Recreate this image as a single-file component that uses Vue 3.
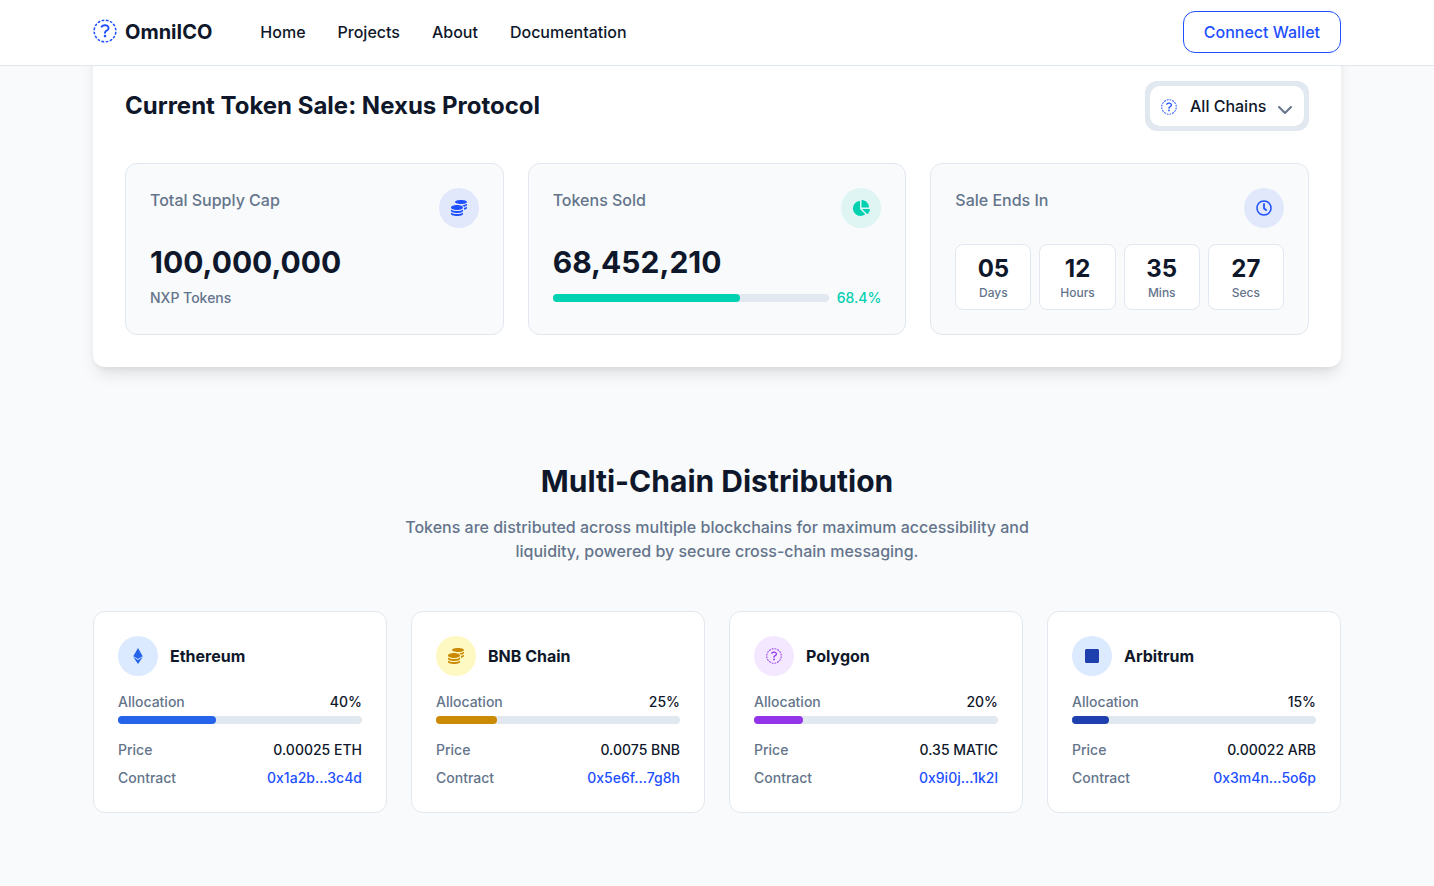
<script setup>
const navLinks = ['Home', 'Projects', 'About', 'Documentation']

const countdown = [
  { value: '05', unit: 'Days' },
  { value: '12', unit: 'Hours' },
  { value: '35', unit: 'Mins' },
  { value: '27', unit: 'Secs' },
]

const chains = [
  { id: 'ethereum', name: 'Ethereum', icon: 'ethereum', share: 40, price: '0.00025 ETH', contract: '0x1a2b...3c4d' },
  { id: 'bnb', name: 'BNB Chain', icon: 'coins', share: 25, price: '0.0075 BNB', contract: '0x5e6f...7g8h' },
  { id: 'polygon', name: 'Polygon', icon: 'unknown', share: 20, price: '0.35 MATIC', contract: '0x9i0j...1k2l' },
  { id: 'arbitrum', name: 'Arbitrum', icon: 'square', share: 15, price: '0.00022 ARB', contract: '0x3m4n...5o6p' },
]

const icons = {
  coins: {
    box: '0 0 512 512',
    d: 'M0 405.3V448c0 35.3 86 64 192 64s192-28.7 192-64v-42.7C342.7 434.4 267.2 448 192 448S41.3 434.4 0 405.3zM320 128c106 0 192-28.7 192-64S426 0 320 0 128 28.7 128 64s86 64 192 64zM0 300.4V352c0 35.3 86 64 192 64s192-28.7 192-64v-51.6c-41.3 34-116.9 51.6-192 51.6S41.3 334.4 0 300.4zm416 11c57.3-11.1 96-31.7 96-55.4v-42.7c-23.2 16.4-57.3 27.6-96 34.5v63.6zM192 160C86 160 0 195.8 0 240s86 80 192 80 192-35.8 192-80-86-80-192-80zm219.3 56.3c60-10.8 100.7-32 100.7-56.3v-42.7c-35.5 25.1-96.5 38.6-160.7 41.8 29.5 14.3 51.2 33.5 60 57.2z',
  },
  ethereum: {
    box: '0 0 320 512',
    d: 'M311.9 260.8L160 353.6 8 260.8 160 0l151.9 260.8zM160 383.4L8 290.6 160 512l152-221.4-152 92.8z',
  },
  square: {
    box: '0 0 448 512',
    d: 'M400 32H48C21.5 32 0 53.5 0 80v352c0 26.5 21.5 48 48 48h352c26.5 0 48-21.5 48-48V80c0-26.5-21.5-48-48-48z',
  },
  // Dashed ring around a question mark
  unknown: {
    box: '0 0 512 512',
    d: 'M156.5,447.7l-12.6,29.5c-18.7-9.5-35.9-21.2-51.5-34.9l22.7-22.7C127.6,430.5,141.5,440,156.5,447.7z M40.6,272H8.5c1.4,21.2,5.4,41.7,11.7,61.1L50,321.2C45.1,305.5,41.8,289,40.6,272z M40.6,240c1.4-18.8,5.2-37,11.1-54.1l-29.5-12.6C14.7,194.3,10,216.7,8.5,240H40.6z M64.3,156.5c7.8-14.9,17.2-28.8,28.1-41.5L69.7,92.3c-13.7,15.6-25.5,32.8-34.9,51.5L64.3,156.5z M397,419.6c-13.9,12-29.4,22.3-46.1,30.4l11.9,29.8c20.7-9.9,39.8-22.6,56.9-37.6L397,419.6z M115,92.4c13.9-12,29.4-22.3,46.1-30.4l-11.9-29.8c-20.7,9.9-39.8,22.6-56.8,37.6L115,92.4z M447.7,355.5c-7.8,14.9-17.2,28.8-28.1,41.5l22.7,22.7c13.7-15.6,25.5-32.9,34.9-51.5L447.7,355.5z M471.4,272c-1.4,18.8-5.2,37-11.1,54.1l29.5,12.6c7.5-21.1,12.2-43.5,13.6-66.8H471.4z M321.2,462c-15.7,5-32.2,8.2-49.2,9.4v32.1c21.2-1.4,41.7-5.4,61.1-11.7L321.2,462z M240,471.4c-18.8-1.4-37-5.2-54.1-11.1l-12.6,29.5c21.1,7.5,43.5,12.2,66.8,13.6V471.4z M462,190.8c5,15.7,8.2,32.2,9.4,49.2h32.1c-1.4-21.2-5.4-41.7-11.7-61.1L462,190.8z M92.4,397c-12-13.9-22.3-29.4-30.4-46.1l-29.8,11.9c9.9,20.7,22.6,39.8,37.6,56.9L92.4,397z M272,40.6c18.8,1.4,36.9,5.2,54.1,11.1l12.6-29.5C317.7,14.7,295.3,10,272,8.5V40.6z M190.8,50c15.7-5,32.2-8.2,49.2-9.4V8.5c-21.2,1.4-41.7,5.4-61.1,11.7L190.8,50z M442.3,92.3L419.6,115c12,13.9,22.3,29.4,30.5,46.1l29.8-11.9C470,128.5,457.3,109.4,442.3,92.3z M397,92.4l22.7-22.7c-15.6-13.7-32.8-25.5-51.5-34.9l-12.6,29.5C370.4,72.1,384.4,81.5,397,92.4z M284,364a28,28 0 1,1 -56,0a28,28 0 1,1 56,0z M263.7,312h-16c-6.6,0-12-5.4-12-12c0-71,77.4-63.9,77.4-107.8c0-20-17.8-40.2-57.4-40.2c-29.1,0-44.3,9.6-59.2,28.7c-3.9,5-11.1,6-16.2,2.4l-13.1-9.2c-5.6-3.9-6.9-11.8-2.6-17.2c21.2-27.2,46.4-44.7,91.2-44.7c52.3,0,97.4,29.8,97.4,80.2c0,67.6-77.4,63.5-77.4,107.8C275.7,306.6,270.3,312,263.7,312z',
  },
}
</script>

<template>
  <div class="page">
    <header class="topbar">
      <div class="container topbar-row">
        <a class="brand">
          <svg class="brand-icon" :viewBox="icons.unknown.box"><path :d="icons.unknown.d" /></svg>
          <span>OmniICO</span>
        </a>
        <nav class="nav">
          <a v-for="link in navLinks" :key="link">{{ link }}</a>
        </nav>
        <button class="wallet">Connect Wallet</button>
      </div>
    </header>

    <main class="container">
      <section class="sale">
        <div class="sale-head">
          <h2>Current Token Sale: Nexus Protocol</h2>
          <div class="select">
            <button class="select-btn">
              <svg class="glyph select-icon" :viewBox="icons.unknown.box"><path :d="icons.unknown.d" /></svg>
              <span class="select-label">All Chains</span>
              <svg class="chevron" viewBox="0 0 16 10"><path d="M2 3l6 6 6-6" /></svg>
            </button>
          </div>
        </div>

        <div class="stats">
          <article class="stat">
            <div class="stat-head">
              <span>Total Supply Cap</span>
              <i class="badge badge-primary">
                <svg class="glyph" :viewBox="icons.coins.box"><path :d="icons.coins.d" /></svg>
              </i>
            </div>
            <div class="stat-value">100,000,000</div>
            <div class="stat-note">NXP Tokens</div>
          </article>

          <article class="stat">
            <div class="stat-head">
              <span>Tokens Sold</span>
              <i class="badge badge-green">
                <svg class="glyph pie" viewBox="0 0 544 512"><path d="M527.79 288H290.5l158.03 158.03c6.04 6.04 15.98 6.53 22.19.68 38.7-36.46 65.32-85.61 73.13-140.86 1.34-9.46-6.51-17.85-16.06-17.85zm-15.83-64.8C503.72 103.74 408.26 8.28 288.8.04 279.68-.59 272 7.1 272 16.24V240h223.77c9.14 0 16.82-7.68 16.19-16.8zM224 288V50.71c0-9.55-8.39-17.4-17.84-16.06C86.99 51.49-4.1 155.6.14 280.37 4.5 408.51 114.83 512.02 243.03 511.98c50.4-.02 98.6-16.17 139-44.51 7.68-5.43 8.15-16.67 1.5-23.33L224 288z" /></svg>
              </i>
            </div>
            <div class="stat-value">68,452,210</div>
            <div class="sold">
              <div class="bar"><div class="bar-fill sold-fill"></div></div>
              <span>68.4%</span>
            </div>
          </article>

          <article class="stat">
            <div class="stat-head">
              <span>Sale Ends In</span>
              <i class="badge badge-primary">
                <svg class="glyph" viewBox="0 0 512 512"><path d="M256 8C119 8 8 119 8 256s111 248 248 248 248-111 248-248S393 8 256 8zm0 448c-110.500 0-200-89.500-200-200S145.500 56 256 56s200 89.500 200 200-89.500 200-200 200zm61.800-104.400l-84.900-61.700c-3.100-2.300-4.900-5.900-4.900-9.700V116c0-6.600 5.400-12 12-12h32c6.600 0 12 5.400 12 12v141.700l66.800 48.600c5.400 3.900 6.500 11.400 2.600 16.800L334.600 349c-3.900 5.300-11.400 6.500-16.800 2.600z" /></svg>
              </i>
            </div>
            <div class="countdown">
              <div v-for="part in countdown" :key="part.unit" class="tick">
                <div class="tick-value">{{ part.value }}</div>
                <div class="tick-unit">{{ part.unit }}</div>
              </div>
            </div>
          </article>
        </div>
      </section>

      <section class="distribution">
        <h2>Multi-Chain Distribution</h2>
        <p>Tokens are distributed across multiple blockchains for maximum accessibility and liquidity, powered by secure cross-chain messaging.</p>

        <div class="chains">
          <article v-for="chain in chains" :key="chain.id" class="chain" :class="chain.id">
            <div class="chain-head">
              <i class="badge chain-badge">
                <svg class="glyph" :viewBox="icons[chain.icon].box"><path :d="icons[chain.icon].d" /></svg>
              </i>
              <h3>{{ chain.name }}</h3>
            </div>
            <div class="row"><span>Allocation</span><b>{{ chain.share }}%</b></div>
            <div class="bar chain-bar"><div class="bar-fill chain-fill" :style="{ width: chain.share + '%' }"></div></div>
            <div class="row"><span>Price</span><b>{{ chain.price }}</b></div>
            <div class="row contract"><span>Contract</span><a>{{ chain.contract }}</a></div>
          </article>
        </div>
      </section>
    </main>
  </div>
</template>

<style>
body {
  background: #f8fafc;
}
</style>

<style scoped>
.page {
  --primary: #1e50ff;
  --green: #00d1b0;
  --ink: #0f172a;
  --muted: #64748b;
  --line: #e2e8f0;
  height: 886px;
  overflow: hidden;
  background: #f8fafc;
  color: var(--ink);
  font: 500 16px/24px Inter, sans-serif;
}
.page *,
.page *::before {
  box-sizing: border-box;
}
h2, h3, p {
  margin: 0;
}
button {
  font: inherit;
  color: inherit;
  background: #fff;
}
.container {
  max-width: 1280px;
  margin: 0 auto;
  padding: 0 16px;
}
.topbar {
  position: relative;
  z-index: 2;
  height: 66px;
  background: #fff;
  border-bottom: 1px solid #e2e8f0;
}
.topbar-row {
  display: flex;
  align-items: center;
  height: 64px;
}
.brand {
  display: flex;
  align-items: center;
  gap: 8px;
  font-size: 20px;
  line-height: 28px;
  font-weight: 700;
}
.brand-icon {
  width: 24px;
  height: 24px;
  margin-top: -2px;
  fill: var(--primary);
}
.nav {
  display: flex;
  gap: 32px;
  margin-left: 48px;
}
.wallet {
  margin-left: auto;
  padding: 8px 20px;
  border: 1px solid var(--primary);
  border-radius: 12px;
  color: var(--primary);
}
.sale {
  margin-top: -40px;
  padding: 55px 32px 32px;
  background: #fff;
  border-radius: 12px;
  box-shadow: 0 10px 15px -3px rgba(0, 0, 0, 0.1), 0 4px 6px -2px rgba(0, 0, 0, 0.05);
}
.sale-head {
  display: flex;
  align-items: center;
  justify-content: space-between;
  height: 50px;
  margin-bottom: 32px;
}
.sale-head h2 {
  font-size: 24px;
  line-height: 32px;
  font-weight: 700;
}
.select {
  padding: 5px;
  border-radius: 12px;
  background: var(--line);
}
.select-btn {
  display: flex;
  align-items: center;
  width: 154px;
  height: 40px;
  padding: 0 11px;
  border: 0;
  border-radius: 10px;
}
.glyph {
  width: 16px;
  height: 16px;
  fill: currentColor;
}
.pie {
  width: 17px;
}
.select-icon {
  margin-top: 2px;
  color: var(--primary);
}
.select-label {
  margin-left: 13px;
}
.chevron {
  width: 16px;
  height: 10px;
  margin: 6px 0 0 auto;
  fill: none;
  stroke: var(--muted);
  stroke-width: 2;
  stroke-linecap: round;
  stroke-linejoin: round;
}
.stats {
  display: grid;
  grid-template-columns: repeat(3, 1fr);
  gap: 24px;
}
.stat {
  padding: 24px;
  background: #f8fafc;
  border: 1px solid var(--line);
  border-radius: 12px;
}
.stat-head {
  display: flex;
  justify-content: space-between;
  margin-bottom: 16px;
  color: var(--muted);
}
.badge {
  display: flex;
  align-items: center;
  justify-content: center;
  width: 40px;
  height: 40px;
  border-radius: 50%;
}
.badge-primary {
  background: rgba(30, 80, 255, 0.1);
  color: var(--primary);
}
.badge-green {
  background: rgba(0, 209, 176, 0.1);
  color: var(--green);
}
.stat-value {
  margin-bottom: 8px;
  font-size: 30px;
  line-height: 36px;
  font-weight: 700;
}
.stat-note {
  color: var(--muted);
  font-size: 14px;
  line-height: 20px;
}
.sold {
  display: flex;
  align-items: center;
  gap: 8px;
  color: var(--green);
  font-size: 14px;
  line-height: 20px;
}
.bar {
  flex: 1;
  height: 8px;
  border-radius: 4px;
  background: var(--line);
}
.bar-fill {
  height: 100%;
  border-radius: 4px;
}
.sold-fill {
  width: 68%;
  background: var(--green);
}
.countdown {
  display: grid;
  grid-template-columns: repeat(4, 1fr);
  gap: 8px;
}
.tick {
  padding: 8px;
  border: 1px solid var(--line);
  border-radius: 8px;
  background: #fff;
  text-align: center;
}
.tick-value {
  font-size: 24px;
  line-height: 32px;
  font-weight: 700;
}
.tick-unit {
  color: var(--muted);
  font-size: 12px;
  line-height: 16px;
}
.distribution {
  padding-top: 96px;
}
.distribution h2 {
  font-size: 30px;
  line-height: 36px;
  font-weight: 700;
  text-align: center;
}
.distribution p {
  width: 672px;
  margin: 16px auto 48px;
  color: var(--muted);
  text-align: center;
}
.chains {
  display: grid;
  grid-template-columns: repeat(4, 1fr);
  gap: 24px;
}
.chain {
  padding: 24px;
  background: #fff;
  border: 1px solid var(--line);
  border-radius: 12px;
}
.chain-head {
  display: flex;
  align-items: center;
  gap: 12px;
  margin-bottom: 16px;
}
.chain-head h3 {
  font-size: 16px;
  font-weight: 700;
}
.row {
  display: flex;
  justify-content: space-between;
  color: var(--muted);
  font-size: 14px;
  line-height: 20px;
}
.row b {
  color: var(--ink);
  font-weight: 500;
}
.row a {
  color: var(--primary);
}
.contract {
  margin-top: 8px;
}
.chain-bar {
  margin: 4px 0 16px;
}
.chain-fill {
  background: var(--tone);
}
.chain-badge {
  background: var(--tint);
  color: var(--tone);
}
.ethereum {
  --tone: #2563eb;
  --tint: #dbeafe;
}
.bnb {
  --tone: #ca8a04;
  --tint: #fef9c3;
}
.polygon {
  --tone: #9333ea;
  --tint: #f3e8ff;
}
.arbitrum {
  --tone: #1e40af;
  --tint: #dbeafe;
}
</style>
